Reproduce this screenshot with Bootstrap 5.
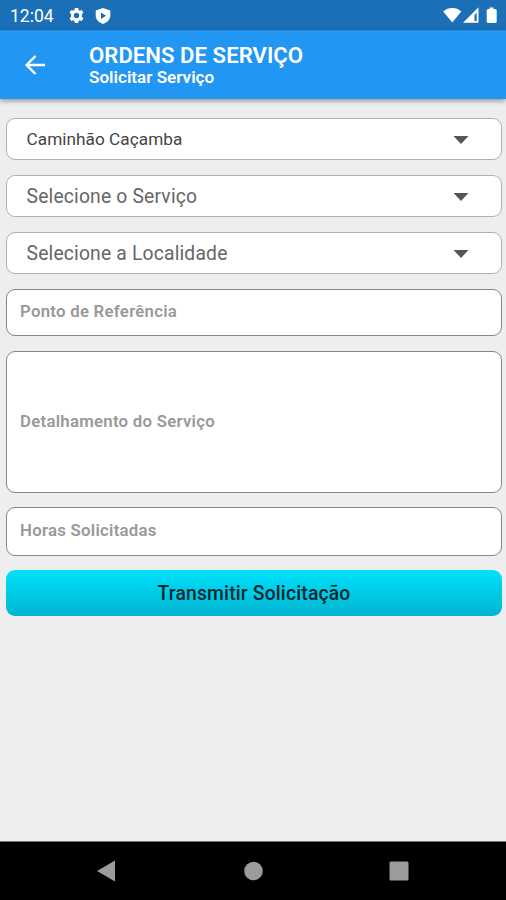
<!DOCTYPE html>
<html lang="pt-BR">
<head>
<meta charset="utf-8">
<meta name="viewport" content="width=device-width, initial-scale=1">
<title>Ordens de Serviço</title>
<link href="https://cdn.jsdelivr.net/npm/bootstrap@5.3.0/dist/css/bootstrap.min.css" rel="stylesheet">
<style>
body{font-family:Roboto,"Liberation Sans",sans-serif;background:#edeef0;height:900px;overflow:hidden}
svg{display:block;flex:none}
.status-bar{height:30px;background:#1a6fb6;color:#fff;padding:1px 7px 0 10px}
.clock{font-size:17.5px;line-height:30px;width:58px}
.app-bar{height:69px;background:#2196f3;color:#fff;padding:12px 0 0 24px;box-shadow:0 2px 5px rgba(0,0,0,.38);border-top:1px solid #1f8be2}
.app-bar .back{margin:12px 43px 0 0}
.app-title{font-size:22.2px;line-height:24px;font-weight:600;white-space:nowrap}
.app-subtitle{font-size:17.1px;line-height:20px;font-weight:600;white-space:nowrap}
.order-form{padding:19px 4px 0 6px}
.picker{height:42px;margin-bottom:15px;padding:2px 31px 0 19.5px;border:1px solid #b0b0b0;border-radius:9px;color:#666;font-size:19.3px;letter-spacing:.18px;line-height:1}
.picker.chosen{color:#444;font-size:17.2px;letter-spacing:.05px}
.entry{height:47px;padding:0 13px 2px;border:1px solid #868686;border-radius:9px;color:#999;font-size:16.8px;letter-spacing:.26px;font-weight:600;line-height:1;margin-bottom:15px}
.entry.details{height:142px;margin-bottom:14px}
.entry.hours{height:49px;margin-bottom:14px}
.send{height:46px;padding-top:8px;border:0;border-radius:9px;background:linear-gradient(#00e1fb,#00b5d0);color:#052730;font-size:19.3px;letter-spacing:.18px;font-weight:500;line-height:1}
.system-nav{height:59px;background:#000;border-top:1px solid #777;padding:0 97px 0 96px}
</style>
</head>
<body class="d-flex flex-column">
<div class="status-bar d-flex align-items-center">
  <span class="clock">12:04</span>
  <svg width="17" height="17" viewBox="0 0 17 17"><path fill="#fff" fill-rule="evenodd" d="M6.8 1h3.4l.4 2 1.2.7 2-.8 1.7 2.9-1.6 1.3v2.8l1.6 1.3-1.7 2.9-2-.8-1.2.7-.4 2H6.8l-.4-2-1.2-.7-2 .8-1.7-2.9 1.6-1.3V7.1L1.500 5.800l1.700-2.900 2 .8 1.200-.7zM8.500 5.800a2.700 2.700 0 1 0 0 5.400 2.700 2.700 0 0 0 0-5.400z"/></svg>
  <svg class="ms-2" width="18" height="18" viewBox="0 0 18 18"><path fill="#fff" d="M10 1 17.300 3.500v5c0 4-3 7-7.300 8.500-4.300-1.500-7.300-4.500-7.300-8.500v-5z"/><path fill="#1a6fb6" d="M8 5.500v6.400l5-3.200z"/></svg>
  <div class="ms-auto d-flex align-items-center">
    <svg width="20" height="17" viewBox="0 0 20 17"><path fill="#fff" d="M1.200 4.500C6-.1 14.500-.1 19.300 4.500L10.300 15.500z"/></svg>
    <svg width="18" height="17" viewBox="0 0 18 17"><path fill="#fff" fill-rule="evenodd" d="M1 15.700 16.500.3v15.400zM12.500 7.900v6h2.200V5.800z"/></svg>
    <svg class="ms-1" width="15" height="18" viewBox="0 0 15 18"><path fill="#fff" d="M5.500 .5h4v1.500h1.700q1.500 0 1.500 1.500v11q0 1.500-1.500 1.500H4.200q-1.500 0-1.500-1.500v-11q0-1.500 1.500-1.500h1.300z"/></svg>
  </div>
</div>
<header class="app-bar d-flex align-items-start position-relative">
  <svg class="back" width="22" height="20" viewBox="0 0 22 20" fill="none" stroke="#fff" stroke-width="2.300"><path d="M21 10H3M11.500 1 2.500 10l9 9"/></svg>
  <div>
    <div class="app-title">ORDENS DE SERVIÇO</div>
    <div class="app-subtitle">Solicitar Serviço</div>
  </div>
</header>
<main class="order-form flex-grow-1">
  <div class="picker chosen bg-white d-flex align-items-center justify-content-between"><span>Caminhão Caçamba</span><svg width="18" height="10" viewBox="0 0 18 10"><path fill="#555" d="M1.500 1h15L9 9z"/></svg></div>
  <div class="picker bg-white d-flex align-items-center justify-content-between"><span>Selecione o Serviço</span><svg width="18" height="10" viewBox="0 0 18 10"><path fill="#555" d="M1.500 1h15L9 9z"/></svg></div>
  <div class="picker bg-white d-flex align-items-center justify-content-between"><span>Selecione a Localidade</span><svg width="18" height="10" viewBox="0 0 18 10"><path fill="#555" d="M1.500 1h15L9 9z"/></svg></div>
  <div class="entry bg-white d-flex align-items-center">Ponto de Referência</div>
  <div class="entry details bg-white d-flex align-items-center">Detalhamento do Serviço</div>
  <div class="entry hours bg-white d-flex align-items-center">Horas Solicitadas</div>
  <div class="d-grid"><button type="button" class="btn send">Transmitir Solicitação</button></div>
</main>
<nav class="system-nav d-flex align-items-center justify-content-between">
  <svg width="20" height="22" viewBox="0 0 20 22"><path fill="#9b9b9b" d="M19 .5v21L1 11z"/></svg>
  <svg width="20" height="20" viewBox="0 0 20 20"><circle cx="10.500" cy="10" r="9.300" fill="#9b9b9b"/></svg>
  <svg width="20" height="20" viewBox="0 0 20 20"><rect x=".5" y=".5" width="19" height="19" rx="1.500" fill="#9b9b9b"/></svg>
</nav>
<script src="https://cdn.jsdelivr.net/npm/bootstrap@5.3.0/dist/js/bootstrap.bundle.min.js"></script>
</body>
</html>
